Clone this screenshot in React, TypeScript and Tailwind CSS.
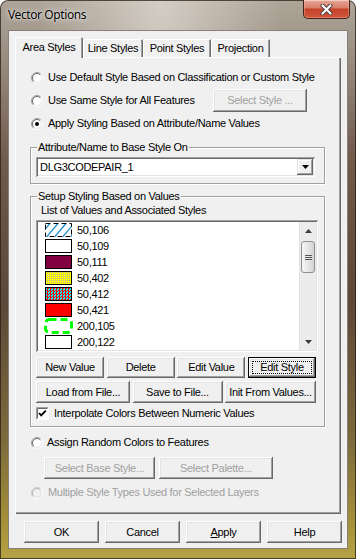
import type { ReactNode } from "react";

// ── Classic Win32 bits ────────────────────────────────────────────────────────

function Radio({ checked = false, disabled = false }: { checked?: boolean; disabled?: boolean }) {
  return (
    <svg width="12" height="12" viewBox="0 0 12 12" className="shrink-0">
      <circle cx="6" cy="6" r="5" fill={disabled ? "#f0f0f0" : "#fff"} />
      <path d="M9.9 2.1A5.5 5.5 0 0 0 2.1 9.9" fill="none" stroke={disabled ? "#c8c8c8" : "#a0a0a0"} />
      <path d="M2.1 9.9A5.5 5.5 0 0 0 9.9 2.1" fill="none" stroke="#fff" />
      <path d="M9.2 2.8A4.5 4.5 0 0 0 2.8 9.2" fill="none" stroke={disabled ? "#b4b4b4" : "#696969"} />
      <path d="M2.8 9.2A4.5 4.5 0 0 0 9.2 2.8" fill="none" stroke="#e3e3e3" />
      {checked && <circle cx="6" cy="6" r="2" fill="#000" />}
    </svg>
  );
}

function Check() {
  return (
    <svg width="13" height="13" viewBox="0 0 13 13" className="shrink-0">
      <rect x="0" y="0" width="13" height="13" fill="#fff" />
      <path d="M0.5 12.5V0.5H12.5" fill="none" stroke="#a0a0a0" />
      <path d="M1.5 11.5V1.5H11.5" fill="none" stroke="#696969" />
      <path d="M0.5 12.5H12.5V0.5" fill="none" stroke="#fff" />
      <polyline points="3,6 5.2,8.4 9.8,3.6" fill="none" stroke="#000" strokeWidth="1.8" />
    </svg>
  );
}

function Btn({
  children,
  w,
  h = "h-[22px]",
  disabled = false,
  focused = false,
}: {
  children: ReactNode;
  w: string;
  h?: string;
  disabled?: boolean;
  focused?: boolean;
}) {
  const frame = focused
    ? "shadow-[inset_0_0_0_1px_#000,inset_-2px_-2px_#696969,inset_2px_2px_#fff,inset_-3px_-3px_#a0a0a0,inset_3px_3px_#e3e3e3]"
    : "shadow-[inset_-1px_-1px_#696969,inset_1px_1px_#fff,inset_-2px_-2px_#a0a0a0,inset_2px_2px_#e3e3e3]";
  return (
    <div
      className={`${w} ${h} ${frame} relative flex items-center justify-center shrink-0 bg-[#f0f0f0] ${
        disabled ? "text-[#a0a0a0]" : "text-black"
      }`}
    >
      {focused && <span className="absolute inset-[4px] border border-dotted border-black" />}
      <span className="relative">{children}</span>
    </div>
  );
}

// ── Swatches ──────────────────────────────────────────────────────────────────

function Swatch({ kind }: { kind: string }) {
  if (kind === "hatch")
    return (
      <svg width="27" height="14" viewBox="0 0 27 14" className="shrink-0">
        <rect x="0" y="0" width="27" height="14" fill="#fff" />
        {[-6, 2, 10, 18, 26].map((x) => (
          <line key={x} x1={x} y1="13.5" x2={x + 11} y2="0.5" stroke="#1b8ccc" strokeWidth="1.2" />
        ))}
        <rect x="0.5" y="0.5" width="26" height="13" fill="none" stroke="#000" strokeDasharray="5 3" />
      </svg>
    );
  if (kind === "dash")
    return (
      <svg width="29" height="16" viewBox="0 0 29 16" className="shrink-0 -ml-[1px] -mr-[1px]">
        <rect x="1.5" y="1.5" width="26" height="13" rx="4" fill="none" stroke="#00ff00" strokeWidth="3" strokeDasharray="7 4" />
      </svg>
    );
  const fill: Record<string, string> = {
    white: "bg-white",
    maroon: "bg-[#800040]",
    red: "bg-[#ff0000]",
    yellow:
      "bg-[image:repeating-conic-gradient(#a8a8a8_0%_25%,#ffff00_0%_100%)] bg-[length:2px_2px]",
    cyan: "bg-[image:repeating-conic-gradient(#ff0000_0%_25%,#00ffff_0%_50%)] bg-[length:3px_3px]",
  };
  return <div className={`w-[27px] h-[14px] shrink-0 border border-black ${fill[kind]}`} />;
}

const items = [
  { v: "50,106", k: "hatch" },
  { v: "50,109", k: "white" },
  { v: "50,111", k: "maroon" },
  { v: "50,402", k: "yellow" },
  { v: "50,412", k: "cyan" },
  { v: "50,421", k: "red" },
  { v: "200,105", k: "dash" },
  { v: "200,122", k: "white" },
];

function ScrollBar() {
  return (
    <div className="w-[17px] h-full flex flex-col bg-[#ececec] border-l border-[#e2e2e2]">
      <div className="h-[17px] flex items-center justify-center">
        <svg width="7" height="4" viewBox="0 0 7 4">
          <path d="M0 4L3.5 0L7 4Z" fill="#3c3c3c" />
        </svg>
      </div>
      <div className="mt-[2px] mx-[1px] h-[32px] rounded-[3px] border border-[#8f8f8f] bg-[image:linear-gradient(90deg,#f6f6f6,#e6e6e6_50%,#d3d3d3)] flex flex-col items-center justify-center gap-[1px]">
        <div className="w-[7px] h-[1px] bg-[#555]" />
        <div className="w-[7px] h-[1px] bg-[#555]" />
        <div className="w-[7px] h-[1px] bg-[#555]" />
      </div>
      <div className="flex-1" />
      <div className="h-[17px] flex items-center justify-center">
        <svg width="7" height="4" viewBox="0 0 7 4">
          <path d="M0 0L3.5 4L7 0Z" fill="#3c3c3c" />
        </svg>
      </div>
    </div>
  );
}

const sunken =
  "shadow-[inset_1px_1px_#a0a0a0,inset_-1px_-1px_#fff,inset_2px_2px_#696969,inset_-2px_-2px_#e3e3e3]";

// ── Dialog ────────────────────────────────────────────────────────────────────

export default function App() {
  return (
    <div className="w-[356px] h-[559px] flex flex-col rounded-t-[8px] overflow-hidden font-['Liberation_Sans',Arial,sans-serif] text-[11px] leading-[13px] tracking-[-0.3px] text-black shadow-[inset_0_0_0_1px_rgba(40,30,20,0.75)] bg-[image:radial-gradient(ellipse_at_45%_0%,rgba(225,220,212,0.75),transparent_45%),linear-gradient(180deg,#aea497_0px,#a0958a_40px,#6f5a4c_160px,#5b4838_300px,#7c6a3c_440px,#a8943a_530px,#b6a346_559px)]">
      {/* title bar */}
      <div className="h-[30px] flex items-start justify-between pl-[8px] pr-[6px]">
        <div className="mt-[7px] font-['Noto_Sans',sans-serif] text-[12px] leading-[16px] tracking-[-0.4px] text-black [text-shadow:0_0_6px_rgba(255,255,255,0.9),0_0_2px_rgba(255,255,255,0.9)]">
          Vector Options
        </div>
        <div className="w-[47px] h-[19px] rounded-b-[5px] border border-t-0 border-[#47201a] shadow-[inset_0_1px_0_rgba(255,255,255,0.35),inset_0_0_0_1px_rgba(255,200,180,0.35)] bg-[image:linear-gradient(180deg,#e6a898_0%,#d9806a_42%,#c4442b_52%,#d0583b_100%)] flex items-center justify-center">
          <svg width="13" height="11" viewBox="0 0 13 11">
            <path d="M2.5 1.5L10.5 9.5M10.5 1.5L2.5 9.5" stroke="#4a3a38" strokeWidth="4" strokeLinecap="round" />
            <path d="M2.5 1.5L10.5 9.5M10.5 1.5L2.5 9.5" stroke="#fff" strokeWidth="2.2" strokeLinecap="round" />
          </svg>
        </div>
      </div>

      {/* client */}
      <div className="mx-[8px] h-[519px] flex flex-col bg-[#f0f0f0] shadow-[inset_0_0_0_1px_#8a7f76]">
        {/* tabs */}
        <div className="h-[27px] flex items-end pl-[7px]">
          <div className="relative z-10 w-[68px] h-[21px] -mb-[1px] rounded-t-[2px] bg-[#f0f0f0] flex items-center justify-center shadow-[inset_1px_1px_#fff,inset_-1px_0_#696969,inset_-2px_0_#a0a0a0]">
            Area Styles
          </div>
          <div className="w-[60px] h-[18px] pt-[1px] rounded-t-[2px] flex items-center justify-center shadow-[inset_1px_1px_#fff,inset_-1px_0_#696969,inset_-2px_0_#a0a0a0]">
            Line Styles
          </div>
          <div className="w-[68px] h-[18px] pt-[1px] rounded-t-[2px] flex items-center justify-center shadow-[inset_1px_1px_#fff,inset_-1px_0_#696969,inset_-2px_0_#a0a0a0]">
            Point Styles
          </div>
          <div className="w-[59px] h-[18px] pt-[1px] rounded-t-[2px] flex items-center justify-center shadow-[inset_1px_1px_#fff,inset_-1px_0_#696969,inset_-2px_0_#a0a0a0]">
            Projection
          </div>
        </div>

        {/* panel */}
        <div className="ml-[7px] w-[326px] h-[457px] flex flex-col pl-[15px] pr-[16px] pt-[9px] shadow-[inset_1px_1px_#fff,inset_-1px_-1px_#696969,inset_-2px_-2px_#a0a0a0]">
          <div className="h-[23px] flex items-center gap-[5px] pl-[1px]">
            <Radio />
            <span>Use Default Style Based on Classification or Custom Style</span>
          </div>
          <div className="h-[23px] flex items-center gap-[5px] pl-[1px]">
            <Radio />
            <span>Use Same Style for All Features</span>
            <div className="ml-auto mr-[18px]">
              <Btn w="w-[94px]" h="h-[23px]" disabled>
                Select Style ...
              </Btn>
            </div>
          </div>
          <div className="h-[23px] flex items-center gap-[5px] pl-[1px]">
            <Radio checked />
            <span>Apply Styling Based on Attribute/Name Values</span>
          </div>

          <fieldset className="mt-[6px] border border-[#a0a0a0] shadow-[inset_1px_1px_#fff,1px_1px_#fff]">
            <legend className="ml-[6px] px-[1px] leading-[13px] bg-[#f0f0f0]">Attribute/Name to Base Style On</legend>
            <div className="pt-[3px] pb-[6px] pl-[5px]">
              <div className={`w-[279px] h-[20px] p-[2px] bg-white flex items-center ${sunken}`}>
                <span className="pl-[2px]">DLG3CODEPAIR_1</span>
                <div className="ml-auto w-[16px] h-[16px] bg-[#f0f0f0] flex items-center justify-center shadow-[inset_-1px_-1px_#696969,inset_1px_1px_#e3e3e3,inset_-2px_-2px_#a0a0a0,inset_2px_2px_#fff]">
                  <svg width="7" height="4" viewBox="0 0 7 4">
                    <path d="M0 0L3.5 4L7 0Z" fill="#000" />
                  </svg>
                </div>
              </div>
            </div>
          </fieldset>

          <fieldset className="mt-[6px] border border-[#a0a0a0] shadow-[inset_1px_1px_#fff,1px_1px_#fff]">
            <legend className="ml-[6px] px-[1px] leading-[13px] bg-[#f0f0f0]">Setup Styling Based on Values</legend>
            <div className="pl-[5px] pb-[6px] flex flex-col">
              <div className="mt-[1px] h-[13px] pl-[5px]">List of Values and Associated Styles</div>
              <div className={`mt-[3px] w-[282px] h-[132px] p-[2px] bg-white flex ${sunken}`}>
                <div className="flex-1 flex flex-col">
                  {items.map((it, i) => (
                    <div key={i} className="h-[16px] flex items-center gap-[5px] pl-[7px]">
                      <Swatch kind={it.k} />
                      <span>{it.v}</span>
                    </div>
                  ))}
                </div>
                <ScrollBar />
              </div>
              <div className="mt-[5px] w-[280px] flex justify-between">
                <Btn w="w-[68px]" h="h-[21px]">New Value</Btn>
                <Btn w="w-[68px]" h="h-[21px]">Delete</Btn>
                <Btn w="w-[68px]" h="h-[21px]">Edit Value</Btn>
                <Btn w="w-[68px]" h="h-[21px]" focused>
                  Edit Style
                </Btn>
              </div>
              <div className="mt-[3px] w-[280px] flex justify-between">
                <Btn w="w-[94px]">Load from File...</Btn>
                <Btn w="w-[90px]">Save to File...</Btn>
                <Btn w="w-[91px]">Init From Values...</Btn>
              </div>
              <div className="mt-[3px] h-[14px] flex items-center gap-[5px]">
                <Check />
                <span>Interpolate Colors Between Numeric Values</span>
              </div>
            </div>
          </fieldset>

          <div className="mt-[4px] h-[23px] flex items-center gap-[4px] pl-[1px]">
            <Radio />
            <span>Assign Random Colors to Features</span>
          </div>
          <div className="mt-[3px] flex gap-[4px] pl-[14px]">
            <Btn w="w-[111px]" disabled>
              Select Base Style...
            </Btn>
            <Btn w="w-[114px]" disabled>
              Select Palette...
            </Btn>
          </div>
          <div className="mt-[2px] h-[23px] flex items-center gap-[5px] pl-[1px] text-[#a0a0a0]">
            <Radio disabled />
            <span>Multiple Style Types Used for Selected Layers</span>
          </div>
        </div>

        {/* dialog buttons */}
        <div className="mt-[7px] flex gap-[6px] pl-[16px]">
          <Btn w="w-[75px]">OK</Btn>
          <Btn w="w-[75px]">Cancel</Btn>
          <Btn w="w-[75px]">
            <span className="underline">A</span>pply
          </Btn>
          <Btn w="w-[75px]">Help</Btn>
        </div>
      </div>
    </div>
  );
}
